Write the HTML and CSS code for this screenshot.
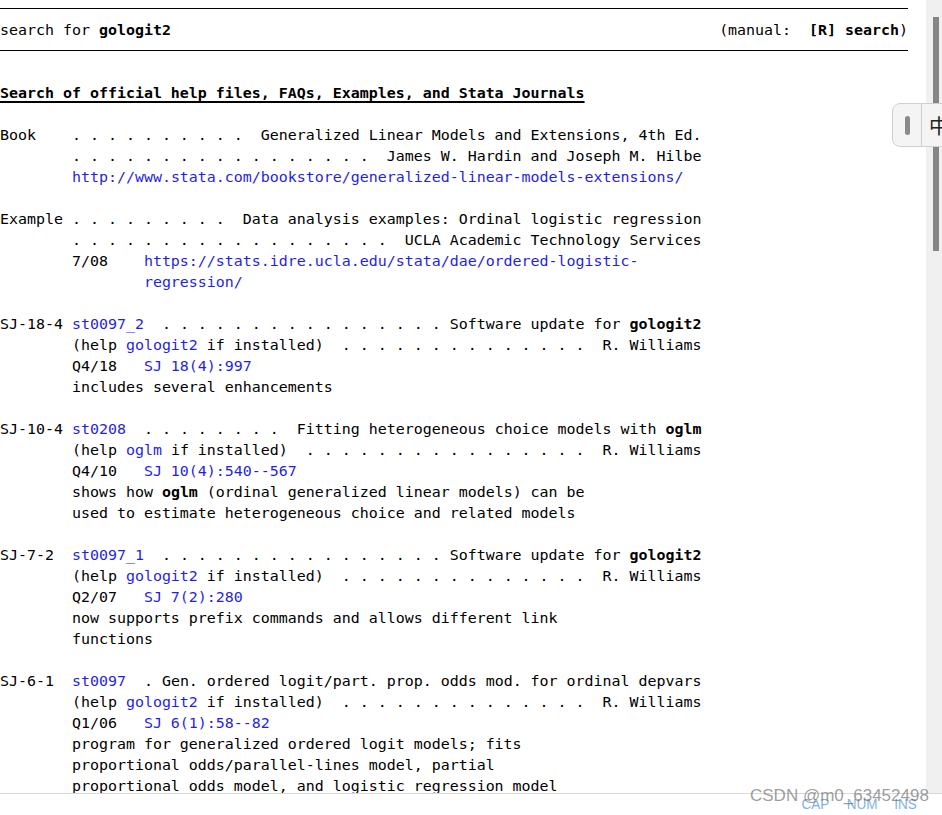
FILE: index.html
```html
<!DOCTYPE html>
<html lang="en">
<head>
<meta charset="utf-8">
<title>search gologit2</title>
<link rel="stylesheet" href="styles.css">
</head>
<body>
<div class="app">
  <div class="viewport">
    <main class="content">
      <div class="head">
        <span>search for <b>gologit2</b></span>
        <span>(manual:  <b>[R] search</b>)</span>
      </div>
      <div class="results">
        <div class="heading">Search of official help files, FAQs, Examples, and Stata Journals</div>

        <div class="entry">
          <div class="ln">Book    . . . . . . . . . .  Generalized Linear Models and Extensions, 4th Ed.</div>
          <div class="ln">        . . . . . . . . . . . . . . . . .  James W. Hardin and Joseph M. Hilbe</div>
          <div class="ln">        <a>http://www.stata.com/bookstore/generalized-linear-models-extensions/</a></div>
        </div>

        <div class="entry">
          <div class="ln">Example . . . . . . . . .  Data analysis examples: Ordinal logistic regression</div>
          <div class="ln">        . . . . . . . . . . . . . . . . . .  UCLA Academic Technology Services</div>
          <div class="ln">        7/08    <a>https://stats.idre.ucla.edu/stata/dae/ordered-logistic-</a></div>
          <div class="ln">                <a>regression/</a></div>
        </div>

        <div class="entry">
          <div class="ln">SJ-18-4 <a>st0097_2</a>  . . . . . . . . . . . . . . . . Software update for <b>gologit2</b></div>
          <div class="ln">        (help <a>gologit2</a> if installed)  . . . . . . . . . . . . . .  R. Williams</div>
          <div class="ln">        Q4/18   <a>SJ 18(4):997</a></div>
          <div class="ln">        includes several enhancements</div>
        </div>

        <div class="entry">
          <div class="ln">SJ-10-4 <a>st0208</a>  . . . . . . . .  Fitting heterogeneous choice models with <b>oglm</b></div>
          <div class="ln">        (help <a>oglm</a> if installed)  . . . . . . . . . . . . . . . .  R. Williams</div>
          <div class="ln">        Q4/10   <a>SJ 10(4):540--567</a></div>
          <div class="ln">        shows how <b>oglm</b> (ordinal generalized linear models) can be</div>
          <div class="ln">        used to estimate heterogeneous choice and related models</div>
        </div>

        <div class="entry">
          <div class="ln">SJ-7-2  <a>st0097_1</a>  . . . . . . . . . . . . . . . . Software update for <b>gologit2</b></div>
          <div class="ln">        (help <a>gologit2</a> if installed)  . . . . . . . . . . . . . .  R. Williams</div>
          <div class="ln">        Q2/07   <a>SJ 7(2):280</a></div>
          <div class="ln">        now supports prefix commands and allows different link</div>
          <div class="ln">        functions</div>
        </div>

        <div class="entry">
          <div class="ln">SJ-6-1  <a>st0097</a>  . Gen. ordered logit/part. prop. odds mod. for ordinal depvars</div>
          <div class="ln">        (help <a>gologit2</a> if installed)  . . . . . . . . . . . . . .  R. Williams</div>
          <div class="ln">        Q1/06   <a>SJ 6(1):58--82</a></div>
          <div class="ln">        program for generalized ordered logit models; fits</div>
          <div class="ln">        proportional odds/parallel-lines model, partial</div>
          <div class="ln">        proportional odds model, and logistic regression model</div>
        </div>
      </div>
    </main>
    <div class="vscroll"><div class="thumb"></div></div>
  </div>
  <footer class="status">
    <span>CAP</span><span>NUM</span><span>INS</span>
  </footer>

  <div class="ime">
    <span class="ime-grip"></span>
    <span class="ime-lang">中</span>
  </div>
  <div class="watermark">CSDN @m0_63452498</div>
</div>
</body>
</html>
```

FILE: styles.css
```css
* { box-sizing: border-box; }
html, body { margin: 0; padding: 0; background: #fff; }
body { width: 942px; height: 815px; overflow: hidden; }

.app {
  position: relative;
  width: 942px;
  height: 815px;
  display: flex;
  flex-direction: column;
}

.viewport {
  height: 793px;
  display: flex;
  overflow: hidden;
}

.content {
  width: 926px;
  padding-right: 18px;
  font-family: "DejaVu Sans Mono", "Liberation Mono", monospace;
  font-size: 14.95px;
  line-height: 21px;
  color: #000;
}

.head {
  margin-top: 8px;
  border-top: 1px solid #000;
  border-bottom: 1px solid #000;
  padding: 11px 0 9px;
  display: flex;
  justify-content: space-between;
  white-space: pre;
}

.results { margin-top: 32px; }

.heading {
  font-weight: bold;
  text-decoration: underline;
  text-decoration-thickness: 2px;
  text-underline-offset: 3px;
  margin-bottom: 21px;
}

.entry { margin-bottom: 21px; }
.ln { white-space: pre; height: 21px; }

.ln a { color: #1f1fe6; text-decoration: none; }
b { font-weight: bold; }

.vscroll {
  width: 16px;
  background: #f0f0f0;
  position: relative;
  flex: none;
}
.thumb {
  position: absolute;
  left: 7px;
  top: 17px;
  width: 6px;
  height: 234px;
  background: #858585;
}

.status {
  flex: 1;
  border-top: 1px solid #d8d8d8;
  display: flex;
  justify-content: flex-end;
  gap: 14px;
  padding-right: 24px;
  font-family: "Liberation Sans", Arial, sans-serif;
  font-size: 15px;
  line-height: 20px;
  color: #7fb2e0;
}
.status span { transform: scaleX(0.9); }

.ime {
  position: absolute;
  left: 892px;
  top: 103px;
  width: 70px;
  height: 44px;
  border: 1px solid #cfcfcf;
  border-radius: 8px;
  background: #f4f4f4;
  display: flex;
  align-items: center;
}
.ime-grip {
  width: 5px;
  height: 19px;
  margin-left: 12px;
  border-radius: 3px;
  background: #8a8a8a;
}
.ime-lang {
  margin-left: 11px;
  padding-left: 7px;
  border-left: 1px solid #cfcfcf;
  height: 100%;
  display: flex;
  align-items: center;
  font-family: "Noto Sans CJK SC", sans-serif;
  font-size: 20px;
  color: #222;
}

.watermark {
  position: absolute;
  left: 750px;
  top: 786px;
  font-family: "Liberation Sans", Arial, sans-serif;
  font-size: 17px;
  line-height: 20px;
  color: rgba(90, 90, 90, 0.6);
  white-space: nowrap;
}
```
